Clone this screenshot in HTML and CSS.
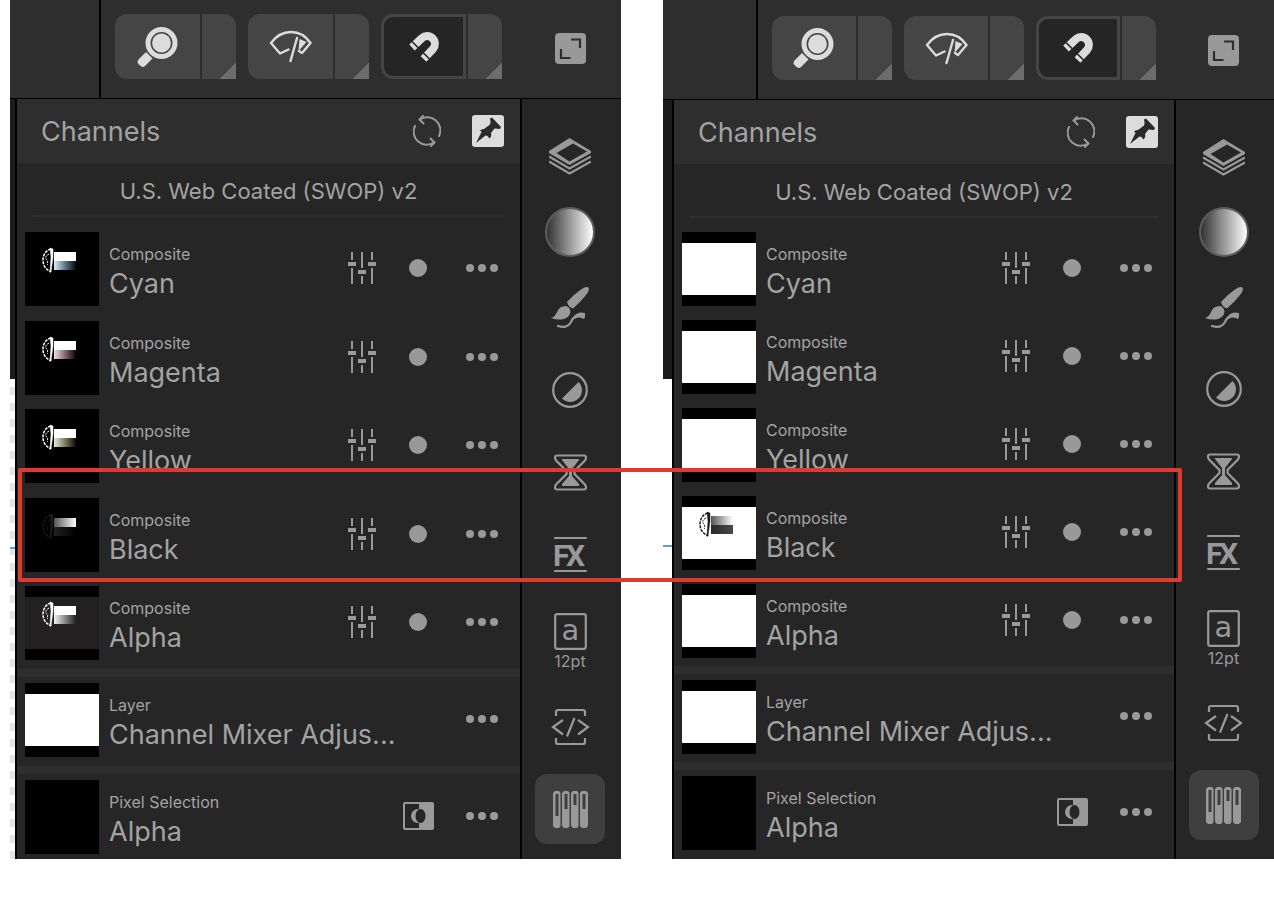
FILE: index.html
```html
<!DOCTYPE html>
<html lang="en">
    <head>
        <meta charset="UTF-8" />
        <title>Channels</title>
        <link rel="stylesheet" href="styles.css">
    </head>
    <body>
        <svg class="defs" aria-hidden="true">
            <defs>
                <linearGradient id="g-cyan"><stop offset="0" stop-color="#dfeaf0" /><stop offset=".5" stop-color="#5d7a8a" /><stop offset="1" stop-color="#00080c" /></linearGradient>
                <linearGradient id="g-magenta"><stop offset="0" stop-color="#eedfe6" /><stop offset=".5" stop-color="#886672" /><stop offset="1" stop-color="#0c0004" /></linearGradient>
                <linearGradient id="g-yellow"><stop offset="0" stop-color="#e8e8dc" /><stop offset=".5" stop-color="#7f7c5c" /><stop offset="1" stop-color="#0a0900" /></linearGradient>
                <linearGradient id="g-grey"><stop offset="0" stop-color="#f2f2f2" /><stop offset="1" stop-color="#222021" /></linearGradient>
                <linearGradient id="g-rise"><stop offset="0" stop-color="#555" /><stop offset="1" stop-color="#fff" /></linearGradient>
                <linearGradient id="g-dark"><stop offset="0" stop-color="#222" /><stop offset="1" stop-color="#000" /></linearGradient>
                <linearGradient id="g-ink"><stop offset="0" stop-color="#2a2829" /><stop offset="1" stop-color="#4a4849" /></linearGradient>

                <symbol id="sketch" viewBox="0 0 74 74">
                    <path d="M26 17C21 18 18 23 18 28s2 9 8 12" fill="none" stroke="currentColor" stroke-width="1.5" stroke-dasharray="3 1" />
                    <path d="M24 22c-4 2-4 5-2 6s-1 4 1 5" fill="none" stroke="currentColor" stroke-dasharray="2 1" />
                    <path d="M25 16l3 1v8l-2 15-1-1 1-14z" fill="currentColor" stroke="currentColor" stroke-width=".5" />
                </symbol>
                <symbol id="magnifier" viewBox="0 0 42 42">
                    <circle cx="24.5" cy="17" r="13.5" fill="none" stroke="currentColor" stroke-width="5" />
                    <circle cx="24.5" cy="17" r="9.4" fill="currentColor" />
                    <path d="M9 26l6.5 6.5L8 40q-2.500 2-5-.5L1.500 38q-2-2 0-4.500z" fill="currentColor" />
                </symbol>
                <symbol id="wiper" viewBox="0 0 43 33">
                    <path d="M19.500 19.500l-8.500 4L2 13Q10 2 22 2t19.500 11L33 23l-3-2M28 8l-6.500 23" fill="none" stroke="currentColor" stroke-width="2.4" stroke-linejoin="round" stroke-linecap="round" />
                    <path d="M30.500 9l7 3-8 9z" fill="currentColor" />
                </symbol>
                <symbol id="magnet" viewBox="0 0 32 32">
                    <path d="M4 16.500l10-9.500A7.800 7.800 0 0 1 25 18l-9.500 10" fill="none" stroke="currentColor" stroke-width="8" />
                    <path d="M4 10.500l7 7M14.500 21l7 7" stroke="#252525" stroke-width="1.6" />
                </symbol>
                <symbol id="expand" viewBox="0 0 31 31">
                    <rect width="31" height="31" rx="4" fill="currentColor" />
                    <path d="M16 6.500h9V15M6 16v9h9.500" fill="none" stroke="#2e2e2e" stroke-width="2.2" />
                </symbol>
                <symbol id="refresh" viewBox="0 0 28 32">
                    <g id="refresh-arc" fill="none" stroke="currentColor" stroke-width="2" stroke-linecap="round">
                        <path d="M7 4.500A13 13 0 0 1 26 21" />
                        <path d="M10 1L6.500 4.500l4 4" />
                    </g>
                    <use href="#refresh-arc" transform="rotate(180 14 16)" />
                </symbol>
                <symbol id="pin" viewBox="0 0 32 32">
                    <rect width="32" height="32" rx="3" fill="currentColor" />
                    <path d="M4 28l4.500-9q2-2-.5-3.500 2-2 4-1.500l6-4.500q1-3 0-6l2-1 9 9.500-1 2-5.500-.5-3.500 4.500q1 3-1.500 5.500l-2-2.500-2-.5z" fill="#2a2a2a" />
                </symbol>
                <symbol id="faders" viewBox="0 0 28 32">
                    <path d="M4 0v8M4 16v16M14 0v16M14 24v8M24 0v8M24 16v16" stroke="currentColor" stroke-width="2" />
                    <path d="M0 10h8v4H0zM10 18h8v4h-8zM20 10h8v4h-8z" fill="currentColor" />
                </symbol>
                <symbol id="more" viewBox="0 0 32 8">
                    <circle cx="4" cy="4" r="4" fill="currentColor" />
                    <circle cx="16" cy="4" r="4" fill="currentColor" />
                    <circle cx="28" cy="4" r="4" fill="currentColor" />
                </symbol>
                <symbol id="mask" viewBox="0 0 31 28">
                    <rect x="1" y="1" width="29" height="26" rx="1" fill="none" stroke="currentColor" stroke-width="2" />
                    <path d="M16 1h14v26H16z" fill="currentColor" />
                    <circle cx="15" cy="14" r="7" fill="currentColor" />
                    <ellipse cx="17.500" cy="14" rx="5" ry="7" fill="#262626" />
                </symbol>
                <symbol id="layers" viewBox="0 0 42 37">
                    <path d="M20.500 0L42 13v2L20.500 27 0 15v-2zM24 5.500L7.500 15l13 8.500L38 13.500z" fill="currentColor" fill-rule="evenodd" />
                    <path d="M0 18.500l20.500 12 21.500-12M0 23.500l20.500 12 21.500-12" fill="none" stroke="currentColor" stroke-width="2.200" />
                </symbol>
                <symbol id="brush" viewBox="0 0 40 43">
                    <path d="M38.500 1.500Q36 0 31 3.500 23 9 17 16q1 5 6 6.500 8-7 13-13.500 4-5 2.500-7.500z" fill="currentColor" />
                    <path d="M1 32q4-1 6-6 2-6 9-6 4 1 4.500 6-1 6-8.500 7.500-6 .5-11-1.500z" fill="currentColor" />
                    <path d="M8 40q9 3 13-4 3-8 12-6" fill="none" stroke="currentColor" stroke-width="2.200" stroke-linecap="round" />
                    <path d="M24 30q4-5 11-3v4l-1 2q-5-3-10 0z" fill="currentColor" />
                </symbol>
                <symbol id="contrast" viewBox="0 0 36 36">
                    <circle cx="18" cy="18" r="16.800" fill="none" stroke="currentColor" stroke-width="2.200" />
                    <path d="M26.500 10A11.500 11.500 0 0 1 10 26.500z" fill="currentColor" />
                </symbol>
                <symbol id="hourglass" viewBox="0 0 33 37">
                    <path d="M3 1.500h27q2 0 2 2T30.500 7L20.500 17v3L30.500 30q1.500 1.500 1.500 3.500t-2 2H3q-2 0-2-2T2.500 30L12.500 20v-3L2.500 7Q1 5.500 1 3.500t2-2z" fill="none" stroke="currentColor" stroke-width="2.200" />
                    <path d="M8 5h17v1l-7 9v7l7 8v2H8v-2l7-8v-7L8 6z" fill="currentColor" />
                </symbol>
                <symbol id="fx" viewBox="0 0 33 37">
                    <path d="M1 2h31M1 35h31" stroke="currentColor" stroke-width="2.200" stroke-linecap="round" />
                    <text class="fx-text" x="-1 12" y="29.500">FX</text>
                </symbol>
                <symbol id="glyph" viewBox="0 0 33 37">
                    <rect x="1.200" y="1.200" width="30.600" height="34.600" rx="2" fill="none" stroke="currentColor" stroke-width="2.200" />
                    <text class="glyph-text" x="16.500" y="27" text-anchor="middle">a</text>
                </symbol>
                <symbol id="code" viewBox="0 0 39 38">
                    <path d="M5 8V4q0-2 2-2h25q2 0 2 2v4M5 30v4q0 2 2 2h25q2 0 2-2v-4M12 12L2 19l10 7.500M27 12l10 7-10 7.500M23.500 10L16 28.500" fill="none" stroke="currentColor" stroke-width="2.200" />
                </symbol>
                <symbol id="bars" viewBox="0 0 35 37">
                    <path d="M2 0h4l1.500 2v33L6 37H2L0 35V2zM11 0h4l1.500 2v33L15 37h-4l-2-2V2zM20 0h4l1.500 2v33L24 37h-4l-2-2V2zM29 0h4l2 2v33l-2 2h-4l-2-2V2z" fill="currentColor" />
                    <path d="M2.500 3h3v22h-3zM11.500 3h3v15h-3zM20.500 3h3v11h-3zM29.500 3h3v15h-3z" fill="#3f3f3f" />
                </symbol>
            </defs>
        </svg>

        <main class="compare">
            <section class="app app-before">
                <header class="toolbar">
                    <div class="toolbar-side"></div>
                    <div class="tools">
                        <div class="tool">
                            <button class="tool-main" aria-label="Zoom"><svg width="42" height="42"><use href="#magnifier" /></svg></button>
                            <button class="tool-menu" aria-label="Zoom options"></button>
                        </div>
                        <div class="tool">
                            <button class="tool-main" aria-label="View"><svg width="43" height="33"><use href="#wiper" /></svg></button>
                            <button class="tool-menu" aria-label="View options"></button>
                        </div>
                        <div class="tool">
                            <button class="tool-main active" aria-label="Snapping"><svg width="32" height="32"><use href="#magnet" /></svg></button>
                            <button class="tool-menu" aria-label="Snapping options"></button>
                        </div>
                        <button class="expand" aria-label="Full screen"><svg width="31" height="31"><use href="#expand" /></svg></button>
                    </div>
                </header>
                <div class="workspace">
                    <div class="canvas"><div class="guide"></div></div>
                    <div class="panel">
                        <div class="panel-header">
                            <h1>Channels</h1>
                            <button class="refresh" aria-label="Reset"><svg width="28" height="32"><use href="#refresh" /></svg></button>
                            <button class="pin" aria-label="Pin"><svg width="32" height="32"><use href="#pin" /></svg></button>
                        </div>
                        <p class="profile">U.S. Web Coated (SWOP) v2</p>
                        <ul class="channels composite">
                            <li class="channel">
                                <svg class="thumb" viewBox="0 0 74 74"><use class="white" href="#sketch" /><path d="M29 20h22v9H29z" fill="#fff" /><path d="M29 29h22v9H29z" fill="url(#g-cyan)" /></svg>
                                <div class="names"><small>Composite</small><b>Cyan</b></div>
                                <button class="edit" aria-label="Adjust"><svg width="28" height="32"><use href="#faders" /></svg></button>
                                <button class="visible" aria-label="Visible"></button>
                                <button class="more" aria-label="More"><svg width="32" height="8"><use href="#more" /></svg></button>
                            </li>
                            <li class="channel">
                                <svg class="thumb" viewBox="0 0 74 74"><use class="white" href="#sketch" /><path d="M29 20h22v9H29z" fill="#fff" /><path d="M29 29h22v9H29z" fill="url(#g-magenta)" /></svg>
                                <div class="names"><small>Composite</small><b>Magenta</b></div>
                                <button class="edit" aria-label="Adjust"><svg width="28" height="32"><use href="#faders" /></svg></button>
                                <button class="visible" aria-label="Visible"></button>
                                <button class="more" aria-label="More"><svg width="32" height="8"><use href="#more" /></svg></button>
                            </li>
                            <li class="channel">
                                <svg class="thumb" viewBox="0 0 74 74"><use class="white" href="#sketch" /><path d="M29 20h22v9H29z" fill="#fff" /><path d="M29 29h22v9H29z" fill="url(#g-yellow)" /></svg>
                                <div class="names"><small>Composite</small><b>Yellow</b></div>
                                <button class="edit" aria-label="Adjust"><svg width="28" height="32"><use href="#faders" /></svg></button>
                                <button class="visible" aria-label="Visible"></button>
                                <button class="more" aria-label="More"><svg width="32" height="8"><use href="#more" /></svg></button>
                            </li>
                            <li class="channel">
                                <svg class="thumb" viewBox="0 0 74 74"><use class="faint" href="#sketch" /><path d="M29 20h22v9H29z" fill="url(#g-rise)" /><path d="M29 29h22v9H29z" fill="url(#g-dark)" /></svg>
                                <div class="names"><small>Composite</small><b>Black</b></div>
                                <button class="edit" aria-label="Adjust"><svg width="28" height="32"><use href="#faders" /></svg></button>
                                <button class="visible" aria-label="Visible"></button>
                                <button class="more" aria-label="More"><svg width="32" height="8"><use href="#more" /></svg></button>
                            </li>
                            <li class="channel">
                                <svg class="thumb" viewBox="0 0 74 74"><path d="M0 11h74v52H0z" fill="#222021" /><use class="white" href="#sketch" /><path d="M29 20h22v9H29z" fill="#fff" /><path d="M29 29h22v9H29z" fill="url(#g-grey)" /></svg>
                                <div class="names"><small>Composite</small><b>Alpha</b></div>
                                <button class="edit" aria-label="Adjust"><svg width="28" height="32"><use href="#faders" /></svg></button>
                                <button class="visible" aria-label="Visible"></button>
                                <button class="more" aria-label="More"><svg width="32" height="8"><use href="#more" /></svg></button>
                            </li>
                        </ul>
                        <ul class="channels layer">
                            <li class="channel">
                                <svg class="thumb" viewBox="0 0 74 74"><path d="M0 11h74v52H0z" fill="#fff" /></svg>
                                <div class="names"><small>Layer</small><b>Channel Mixer Adjus...</b></div>
                                <button class="more" aria-label="More"><svg width="32" height="8"><use href="#more" /></svg></button>
                            </li>
                        </ul>
                        <ul class="channels selection">
                            <li class="channel">
                                <svg class="thumb" viewBox="0 0 74 74"></svg>
                                <div class="names"><small>Pixel Selection</small><b>Alpha</b></div>
                                <button class="mask" aria-label="Mask"><svg width="31" height="28"><use href="#mask" /></svg></button>
                                <button class="more" aria-label="More"><svg width="32" height="8"><use href="#more" /></svg></button>
                            </li>
                        </ul>
                    </div>
                    <nav class="studio">
                        <button class="studio-button" aria-label="Layers"><svg width="42" height="37"><use href="#layers" /></svg></button>
                        <button class="studio-button colour" aria-label="Colour"><span class="swatch"></span></button>
                        <button class="studio-button" aria-label="Brushes"><svg width="40" height="43"><use href="#brush" /></svg></button>
                        <button class="studio-button" aria-label="Adjustments"><svg width="36" height="36"><use href="#contrast" /></svg></button>
                        <button class="studio-button" aria-label="Filters"><svg width="33" height="37"><use href="#hourglass" /></svg></button>
                        <button class="studio-button" aria-label="Layer effects"><svg width="33" height="37"><use href="#fx" /></svg></button>
                        <button class="studio-button text" aria-label="Text, 12pt"><svg width="33" height="37"><use href="#glyph" /></svg><span>12pt</span></button>
                        <button class="studio-button macro" aria-label="Macros"><svg width="39" height="38"><use href="#code" /></svg></button>
                        <button class="studio-button selected" aria-label="Channels"><svg width="35" height="37"><use href="#bars" /></svg></button>
                    </nav>
                </div>
            </section>

            <section class="app app-after">
                <header class="toolbar">
                    <div class="toolbar-side"></div>
                    <div class="tools">
                        <div class="tool">
                            <button class="tool-main" aria-label="Zoom"><svg width="42" height="42"><use href="#magnifier" /></svg></button>
                            <button class="tool-menu" aria-label="Zoom options"></button>
                        </div>
                        <div class="tool">
                            <button class="tool-main" aria-label="View"><svg width="43" height="33"><use href="#wiper" /></svg></button>
                            <button class="tool-menu" aria-label="View options"></button>
                        </div>
                        <div class="tool">
                            <button class="tool-main active" aria-label="Snapping"><svg width="32" height="32"><use href="#magnet" /></svg></button>
                            <button class="tool-menu" aria-label="Snapping options"></button>
                        </div>
                        <button class="expand" aria-label="Full screen"><svg width="31" height="31"><use href="#expand" /></svg></button>
                    </div>
                </header>
                <div class="workspace">
                    <div class="canvas"><div class="guide"></div></div>
                    <div class="panel">
                        <div class="panel-header">
                            <h1>Channels</h1>
                            <button class="refresh" aria-label="Reset"><svg width="28" height="32"><use href="#refresh" /></svg></button>
                            <button class="pin" aria-label="Pin"><svg width="32" height="32"><use href="#pin" /></svg></button>
                        </div>
                        <p class="profile">U.S. Web Coated (SWOP) v2</p>
                        <ul class="channels composite">
                            <li class="channel">
                                <svg class="thumb" viewBox="0 0 74 74"><path d="M0 11h74v52H0z" fill="#fff" /></svg>
                                <div class="names"><small>Composite</small><b>Cyan</b></div>
                                <button class="edit" aria-label="Adjust"><svg width="28" height="32"><use href="#faders" /></svg></button>
                                <button class="visible" aria-label="Visible"></button>
                                <button class="more" aria-label="More"><svg width="32" height="8"><use href="#more" /></svg></button>
                            </li>
                            <li class="channel">
                                <svg class="thumb" viewBox="0 0 74 74"><path d="M0 11h74v52H0z" fill="#fff" /></svg>
                                <div class="names"><small>Composite</small><b>Magenta</b></div>
                                <button class="edit" aria-label="Adjust"><svg width="28" height="32"><use href="#faders" /></svg></button>
                                <button class="visible" aria-label="Visible"></button>
                                <button class="more" aria-label="More"><svg width="32" height="8"><use href="#more" /></svg></button>
                            </li>
                            <li class="channel">
                                <svg class="thumb" viewBox="0 0 74 74"><path d="M0 11h74v52H0z" fill="#fff" /></svg>
                                <div class="names"><small>Composite</small><b>Yellow</b></div>
                                <button class="edit" aria-label="Adjust"><svg width="28" height="32"><use href="#faders" /></svg></button>
                                <button class="visible" aria-label="Visible"></button>
                                <button class="more" aria-label="More"><svg width="32" height="8"><use href="#more" /></svg></button>
                            </li>
                            <li class="channel">
                                <svg class="thumb" viewBox="0 0 74 74"><path d="M0 11h74v52H0z" fill="#fff" /><use class="ink" href="#sketch" /><path d="M29 20h22v9H29z" fill="url(#g-rise)" /><path d="M29 29h22v9H29z" fill="url(#g-ink)" /></svg>
                                <div class="names"><small>Composite</small><b>Black</b></div>
                                <button class="edit" aria-label="Adjust"><svg width="28" height="32"><use href="#faders" /></svg></button>
                                <button class="visible" aria-label="Visible"></button>
                                <button class="more" aria-label="More"><svg width="32" height="8"><use href="#more" /></svg></button>
                            </li>
                            <li class="channel">
                                <svg class="thumb" viewBox="0 0 74 74"><path d="M0 11h74v52H0z" fill="#fff" /></svg>
                                <div class="names"><small>Composite</small><b>Alpha</b></div>
                                <button class="edit" aria-label="Adjust"><svg width="28" height="32"><use href="#faders" /></svg></button>
                                <button class="visible" aria-label="Visible"></button>
                                <button class="more" aria-label="More"><svg width="32" height="8"><use href="#more" /></svg></button>
                            </li>
                        </ul>
                        <ul class="channels layer">
                            <li class="channel">
                                <svg class="thumb" viewBox="0 0 74 74"><path d="M0 11h74v52H0z" fill="#fff" /></svg>
                                <div class="names"><small>Layer</small><b>Channel Mixer Adjus...</b></div>
                                <button class="more" aria-label="More"><svg width="32" height="8"><use href="#more" /></svg></button>
                            </li>
                        </ul>
                        <ul class="channels selection">
                            <li class="channel">
                                <svg class="thumb" viewBox="0 0 74 74"></svg>
                                <div class="names"><small>Pixel Selection</small><b>Alpha</b></div>
                                <button class="mask" aria-label="Mask"><svg width="31" height="28"><use href="#mask" /></svg></button>
                                <button class="more" aria-label="More"><svg width="32" height="8"><use href="#more" /></svg></button>
                            </li>
                        </ul>
                    </div>
                    <nav class="studio">
                        <button class="studio-button" aria-label="Layers"><svg width="42" height="37"><use href="#layers" /></svg></button>
                        <button class="studio-button colour" aria-label="Colour"><span class="swatch"></span></button>
                        <button class="studio-button" aria-label="Brushes"><svg width="40" height="43"><use href="#brush" /></svg></button>
                        <button class="studio-button" aria-label="Adjustments"><svg width="36" height="36"><use href="#contrast" /></svg></button>
                        <button class="studio-button" aria-label="Filters"><svg width="33" height="37"><use href="#hourglass" /></svg></button>
                        <button class="studio-button" aria-label="Layer effects"><svg width="33" height="37"><use href="#fx" /></svg></button>
                        <button class="studio-button text" aria-label="Text, 12pt"><svg width="33" height="37"><use href="#glyph" /></svg><span>12pt</span></button>
                        <button class="studio-button macro" aria-label="Macros"><svg width="39" height="38"><use href="#code" /></svg></button>
                        <button class="studio-button selected" aria-label="Channels"><svg width="35" height="37"><use href="#bars" /></svg></button>
                    </nav>
                </div>
            </section>

            <!-- outline around the Black channel in both apps -->
            <div class="highlight"></div>
        </main>
    </body>
</html>
```
FILE: styles.css
```css
* {
    box-sizing: border-box;
}

body {
    font-family: 'Inter', 'Roboto', 'Liberation Sans', sans-serif;
    background: #fff;
    color: #a3a3a3;
    margin: 0;
}

button {
    display: flex;
    align-items: center;
    justify-content: center;
    flex: none;
    font: inherit;
    color: #999;
    background: none;
    border: 0;
    margin: 0;
    padding: 0;
}

svg {
    display: block;
    flex: none;
}

.defs {
    position: absolute;
    width: 0;
    height: 0;
}

.compare {
    position: relative;
    display: flex;
    align-items: flex-start;
    gap: 42px;
    padding-left: 10px;
}

.app {
    flex: 1;
    min-width: 0;
    background: #262626;
}

/* toolbar */

.toolbar {
    display: flex;
    background: #2e2e2e;
    border-bottom: 1px solid #000;
}

.toolbar-side {
    width: 91px;
    border-right: 2px solid #000;
}

.tools {
    flex: 1;
    display: flex;
    gap: 12px;
    padding: 14px 35px 19px 14px;
}

.tool {
    display: flex;
    gap: 2px;
    height: 65px;
}

.tool-main {
    width: 85px;
    color: #dcdcdc;
    background: #454545;
    border-radius: 12px 0 0 12px;
}

.tool-main.active {
    background: #252525;
    border: 3px solid #454545;
}

.tool-menu {
    width: 34px;
    background: linear-gradient(135deg, transparent 50%, #6c6c6c 50%) right bottom / 16px 16px no-repeat #454545;
    border-radius: 0 12px 0 0;
}

.expand {
    margin-left: auto;
    padding-top: 4px;
}

/* workspace */

.workspace {
    display: flex;
}

.canvas {
    width: 5px;
    background: #fff;
    border-top: 280px solid #1b1b1b;
}

.app-before .canvas {
    background: repeating-linear-gradient(#fff 0 8px, #e4e4e4 8px 16px);
}

.guide {
    height: 2px;
    margin-top: 168px;
    background: #5a9fe0;
}

.panel {
    flex: 1;
    min-width: 0;
    border: solid #000;
    border-width: 0 2px;
}

.panel-header {
    display: flex;
    align-items: center;
    height: 64px;
    padding: 0 16px 0 24px;
    background: #2e2e2e;
}

.panel-header h1 {
    flex: 1;
    margin: 0;
    padding-top: 2px;
    font-size: 27px;
    font-weight: 400;
    line-height: 36px;
}

.pin {
    margin-left: 31px;
    color: #dcdcdc;
}

.profile {
    margin: 0 16px 9px;
    padding: 14px 0 10px;
    border-bottom: 2px solid #2e2e2e;
    font-size: 22px;
    line-height: 28px;
    text-align: center;
}

.channels {
    list-style: none;
    margin: 0;
    padding: 0;
}

.channels + .channels {
    border-top: 8px solid #2e2e2e;
}

.composite {
    display: grid;
    grid-auto-rows: 1fr;
    height: 443px;
}

.channel {
    display: flex;
    align-items: flex-start;
    padding: 6px 22px 0 8px;
}

.layer .channel {
    height: 89px;
}

.selection .channel {
    height: 85px;
}

.channel button {
    height: 72px;
}

.thumb {
    width: 74px;
    height: 74px;
    background: #000;
}

.white {
    color: #fff;
}

.faint {
    color: #1c1c1c;
}

.ink {
    color: #1c1c1c;
}

.names {
    flex: 1;
    min-width: 0;
    padding: 11px 0 0 10px;
    white-space: nowrap;
}

.names small,
.names b {
    display: block;
    font-size: 16px;
    font-weight: 400;
    line-height: 22px;
}

.names b {
    font-size: 27px;
    line-height: 37px;
}

.visible::before {
    content: '';
    width: 18px;
    height: 18px;
    margin-left: 33px;
    border-radius: 50%;
    background: #999;
}

.more {
    margin-left: 39px;
}

.mask + .more {
    margin-left: 32px;
}

/* studio strip */

.studio {
    display: flex;
    flex-direction: column;
    align-items: center;
    justify-content: space-between;
    width: 99px;
    padding: 25px 3px 15px 0;
}

.studio-button {
    width: 70px;
    height: 64px;
}

.studio-button.colour {
    height: 51px;
}

.swatch {
    width: 50px;
    height: 50px;
    border: 2px solid #5c5c5c;
    border-radius: 50%;
    background: linear-gradient(90deg, #333, #fff);
}

.studio-button.text {
    flex-direction: column;
    height: 74px;
    font-size: 16px;
    line-height: 22px;
}

.studio-button.macro {
    height: 58px;
}

.studio-button.selected {
    height: 70px;
    background: #3f3f3f;
    border-radius: 12px;
}

.fx-text {
    font: 700 30px 'Roboto', sans-serif;
    fill: currentColor;
}

.glyph-text {
    font: 400 29px 'DejaVu Sans', sans-serif;
    fill: currentColor;
}

/* second app, slightly smaller controls */

.app-after .toolbar-side {
    width: 95px;
}

.app-after .tools {
    padding-top: 16px;
}

.app-after .tool {
    height: 64px;
}

.app-after .tool-main {
    width: 84px;
}

.app-after .canvas {
    width: 9px;
    border-top-width: 279px;
}

.app-after .guide {
    margin-top: 166px;
}

.app-after .profile {
    margin-bottom: 8px;
}

.app-after .composite {
    height: 440px;
}

.app-after .layer .channel {
    height: 88px;
}

.app-after .selection .channel {
    height: 89px;
}

.app-after .studio {
    width: 98px;
    padding-bottom: 19px;
}

.highlight {
    position: absolute;
    top: 468px;
    left: 18px;
    right: 92px;
    height: 114px;
    border: 4px solid #de3a32;
    border-radius: 2px;
}
```
